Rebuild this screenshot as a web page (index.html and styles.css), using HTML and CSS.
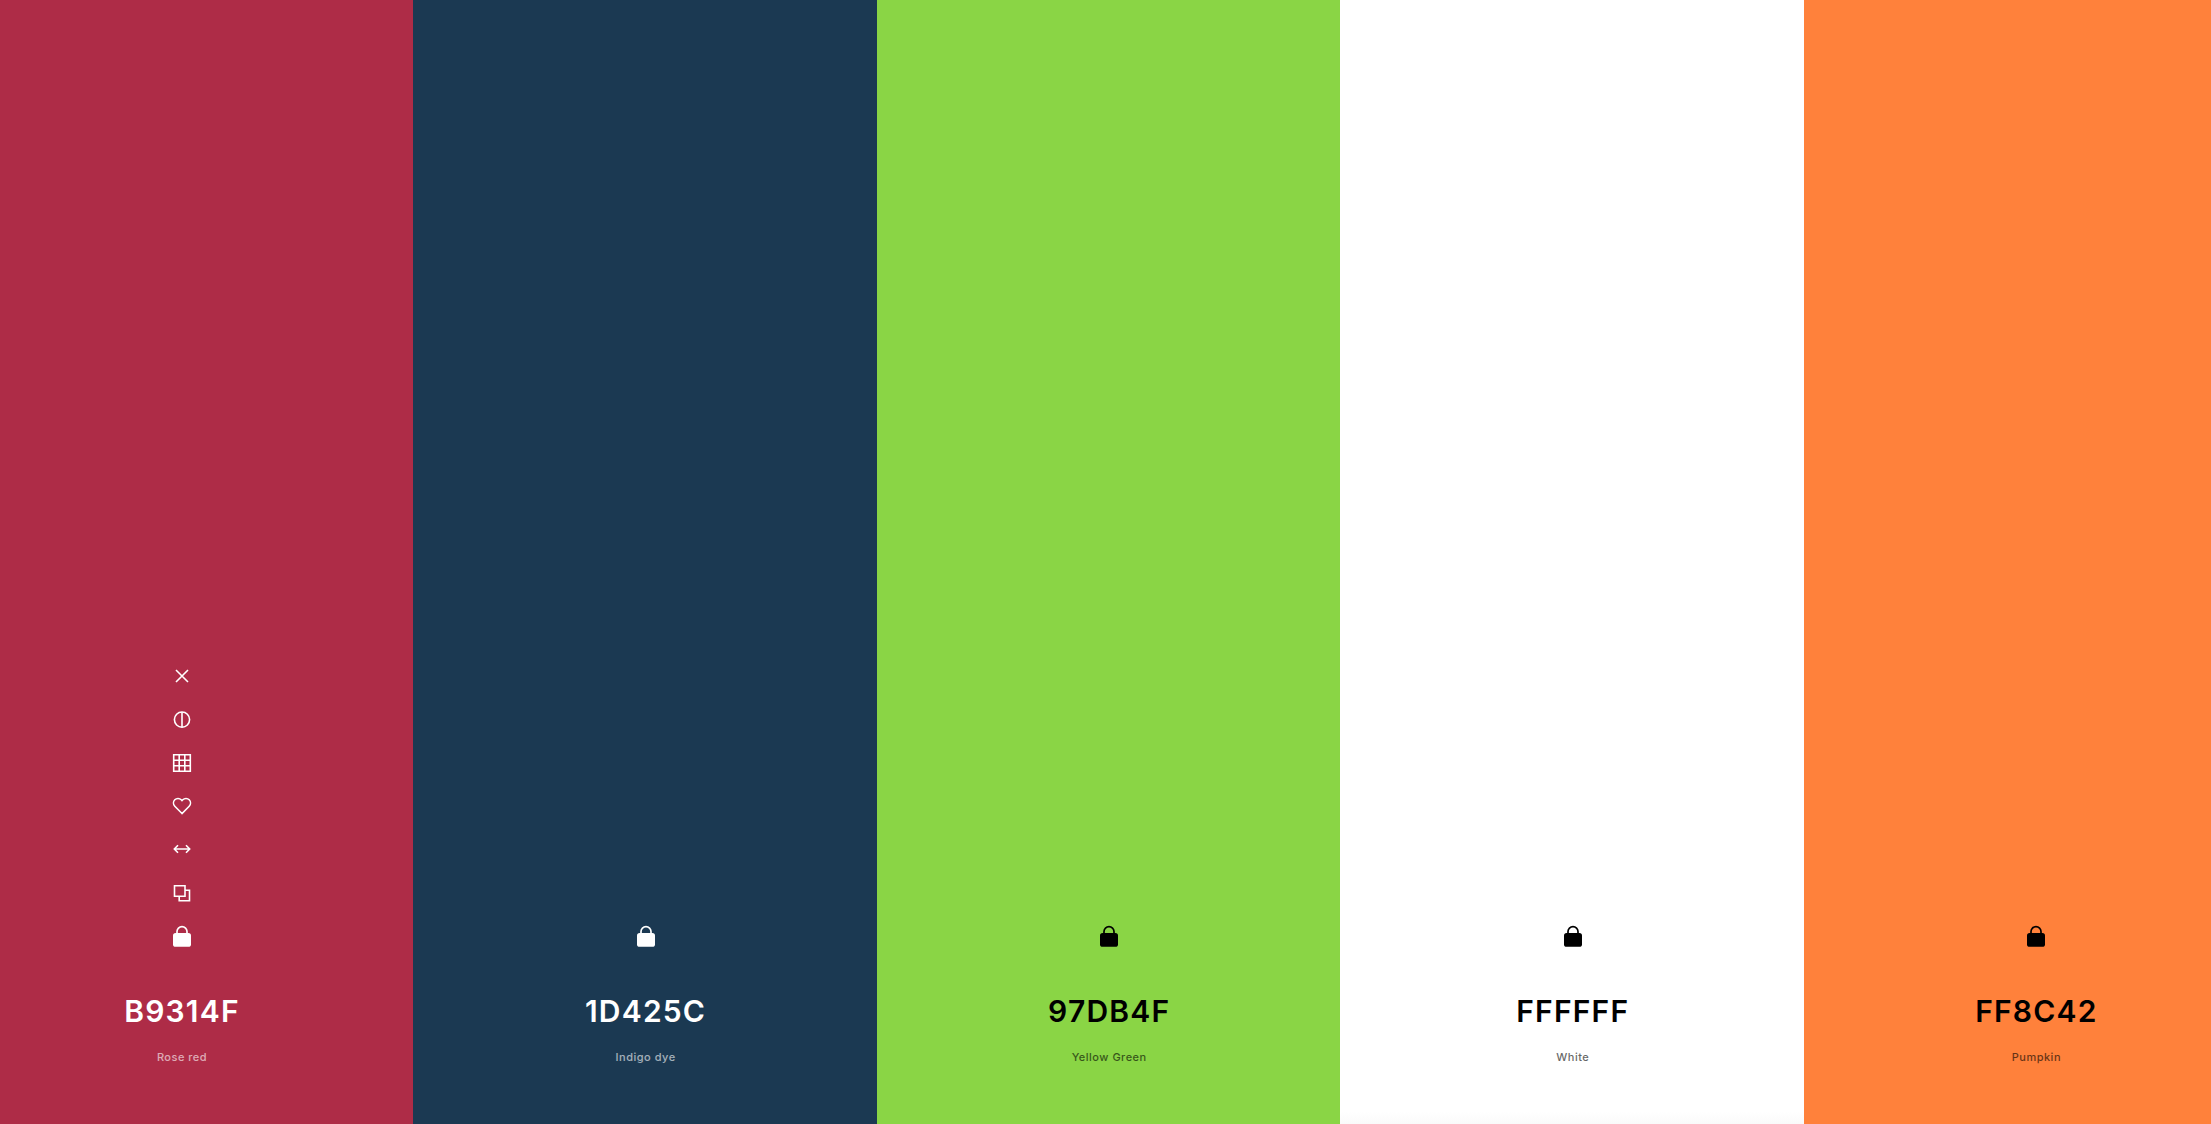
FILE: index.html

```html
<!DOCTYPE html>
<html lang="en">
  <head>
    <meta charset="UTF-8" />
    <meta name="viewport" content="width=device-width, initial-scale=1.0" />
    <title>Palette</title>
    <link rel="stylesheet" href="styles.css">
  </head>
  <body>
    <svg class="sprites" width="0" height="0" aria-hidden="true">
      <symbol id="lock" viewBox="0 0 24 24">
        <rect x="3" y="9" width="18" height="13.8" rx="2.6" fill="currentColor" />
        <path d="M7 10V7.6a5 5 0 0 1 10 0V10" fill="none" stroke="currentColor" stroke-width="1.7" />
      </symbol>
    </svg>

    <main class="palette">
      <section class="col col-red">
        <div class="tools">
          <svg class="icon" viewBox="0 0 24 24">
            <path d="M6 6l12 12M18 6L6 18" />
          </svg>
          <svg class="icon" viewBox="0 0 24 24">
            <circle cx="12" cy="11.6" r="7.6" />
            <path d="M12 4v15.2" />
          </svg>
          <svg class="icon" viewBox="0 0 24 24">
            <path d="M3.7 3.7h16.6v16.6H3.7zM9.2 3.7v16.6M14.8 3.7v16.6M3.7 9.2h16.6M3.7 14.8h16.6" />
          </svg>
          <svg class="icon" viewBox="0 0 24 24">
            <path d="M12 19.5l-7.2-7.3a4.6 4.6 0 0 1 0-6.4 4.5 4.5 0 0 1 6.4 0l.8.8.8-.8a4.5 4.5 0 0 1 6.4 0 4.6 4.6 0 0 1 0 6.4z" />
          </svg>
          <svg class="icon" viewBox="0 0 24 24">
            <path d="M4.5 12h15M8 8.2L4.3 12 8 15.8M16 8.2l3.7 3.8-3.7 3.8" />
          </svg>
          <svg class="icon" viewBox="0 0 24 24">
            <path d="M4.5 4.8h10.5v10.5H4.5zM15 9.3h4.5v10.5H9.2v-4.5" />
          </svg>
          <svg class="icon-lock"><use href="#lock" /></svg>
        </div>
        <h2 class="hex">B9314F</h2>
        <p class="name">Rose red</p>
      </section>

      <section class="col col-navy">
        <svg class="icon-lock"><use href="#lock" /></svg>
        <h2 class="hex">1D425C</h2>
        <p class="name">Indigo dye</p>
      </section>

      <section class="col col-green">
        <svg class="icon-lock"><use href="#lock" /></svg>
        <h2 class="hex">97DB4F</h2>
        <p class="name">Yellow Green</p>
      </section>

      <section class="col col-white">
        <svg class="icon-lock"><use href="#lock" /></svg>
        <h2 class="hex">FFFFFF</h2>
        <p class="name">White</p>
      </section>

      <section class="col col-orange">
        <svg class="icon-lock"><use href="#lock" /></svg>
        <h2 class="hex">FF8C42</h2>
        <p class="name">Pumpkin</p>
      </section>
    </main>
  </body>
</html>
```

FILE: styles.css

```css
html,
body {
  margin: 0;
  padding: 0;
  height: 100%;
  overflow: hidden;
}
body {
  font-family: Inter, "Liberation Sans", sans-serif;
  background-color: #fff;
}
.sprites {
  display: block;
  height: 0;
}
.palette {
  display: grid;
  grid-template-columns: repeat(5, 463.6px);
  height: 100vh;
  margin-left: -50.4px;
}
.col {
  display: flex;
  flex-direction: column;
  align-items: center;
  justify-content: flex-end;
  padding: 0 0 59px 1.2px;
  box-sizing: border-box;
}
.col-red {
  background-color: #ae2c47;
  color: #fff;
}
.col-navy {
  background-color: #1b3952;
  color: #fff;
}
.col-green {
  background-color: #8ad545;
  color: #000;
}
.col-white {
  background: linear-gradient(to bottom, #fff 1112px, #fafafa);
  color: #000;
}
.col-orange {
  background-color: #ff813b;
  color: #000;
}
.tools {
  display: flex;
  flex-direction: column;
  align-items: center;
  gap: 19.3px;
}
.icon,
.icon-lock {
  display: block;
  width: 24px;
  height: 24px;
  flex: none;
}
.icon {
  fill: none;
  stroke: currentColor;
  stroke-width: 1.6;
}
.hex {
  margin: 45px 0 20px;
  font-size: 30px;
  font-weight: 600;
  line-height: 36px;
  letter-spacing: 1.2px;
}
.name {
  margin: 0;
  font-size: 11px;
  font-weight: 500;
  line-height: 16px;
  letter-spacing: 0.5px;
  opacity: 0.6;
}
```
